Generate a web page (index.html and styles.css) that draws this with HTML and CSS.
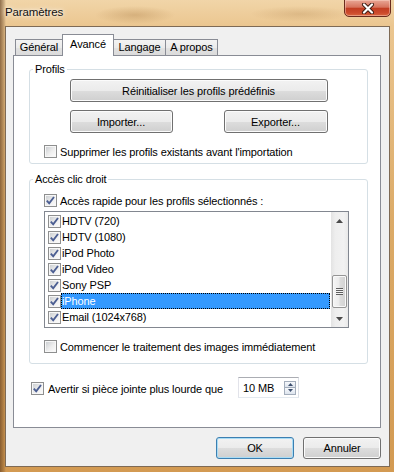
FILE: index.html
```html
<!DOCTYPE html>
<html lang="fr">
<head>
    <meta charset="UTF-8">
    <meta name="viewport" content="width=device-width, initial-scale=1.0">
    <title>Paramètres</title>
    <link rel="stylesheet" href="styles.css">
</head>
<body>
<div class="window">
    <div class="titlebar">
        <span class="title">Paramètres</span>
        <button class="close" type="button" aria-label="Fermer">
            <svg width="14" height="11" viewBox="0 0 14 11">
                <path d="M3 1.5 L11 9.5 M11 1.5 L3 9.5" stroke="#3b1a12" stroke-width="4" stroke-linecap="round"/>
                <path d="M3 1.5 L11 9.5 M11 1.5 L3 9.5" stroke="#fff" stroke-width="2.2" stroke-linecap="round"/>
            </svg>
        </button>
    </div>

    <div class="client">
        <div class="tabs">
            <div class="tab tab-general">Général</div>
            <div class="tab tab-advanced active">Avancé</div>
            <div class="tab tab-lang">Langage</div>
            <div class="tab tab-about">A propos</div>
        </div>

        <div class="panel">
            <fieldset class="group group-profiles">
                <legend>Profils</legend>
                <button class="btn btn-wide" type="button">Réinitialiser les profils prédéfinis</button>
                <div class="btn-row">
                    <button class="btn btn-import" type="button">Importer...</button>
                    <button class="btn btn-export" type="button">Exporter...</button>
                </div>
                <label class="check">
                    <span class="box"></span>
                    <span>Supprimer les profils existants avant l'importation</span>
                </label>
            </fieldset>

            <fieldset class="group group-access">
                <legend>Accès clic droit</legend>
                <label class="check">
                    <span class="box"><svg width="11" height="11" viewBox="0 0 11 11"><path d="M1.8 5.6 L4.2 8.3 L9 2" fill="none" stroke="#4b5e92" stroke-width="1.9"/></svg></span>
                    <span>Accès rapide pour les profils sélectionnés :</span>
                </label>

                <div class="list">
                    <ul class="items">
                        <li class="item"><span class="box"><svg width="11" height="11" viewBox="0 0 11 11"><path d="M1.8 5.6 L4.2 8.3 L9 2" fill="none" stroke="#4b5e92" stroke-width="1.9"/></svg></span><span class="label">HDTV (720)</span></li>
                        <li class="item"><span class="box"><svg width="11" height="11" viewBox="0 0 11 11"><path d="M1.8 5.6 L4.2 8.3 L9 2" fill="none" stroke="#4b5e92" stroke-width="1.9"/></svg></span><span class="label">HDTV (1080)</span></li>
                        <li class="item"><span class="box"><svg width="11" height="11" viewBox="0 0 11 11"><path d="M1.8 5.6 L4.2 8.3 L9 2" fill="none" stroke="#4b5e92" stroke-width="1.9"/></svg></span><span class="label">iPod Photo</span></li>
                        <li class="item"><span class="box"><svg width="11" height="11" viewBox="0 0 11 11"><path d="M1.8 5.6 L4.2 8.3 L9 2" fill="none" stroke="#4b5e92" stroke-width="1.9"/></svg></span><span class="label">iPod Video</span></li>
                        <li class="item"><span class="box"><svg width="11" height="11" viewBox="0 0 11 11"><path d="M1.8 5.6 L4.2 8.3 L9 2" fill="none" stroke="#4b5e92" stroke-width="1.9"/></svg></span><span class="label">Sony PSP</span></li>
                        <li class="item selected"><span class="box"><svg width="11" height="11" viewBox="0 0 11 11"><path d="M1.8 5.6 L4.2 8.3 L9 2" fill="none" stroke="#4b5e92" stroke-width="1.9"/></svg></span><span class="label">iPhone</span></li>
                        <li class="item"><span class="box"><svg width="11" height="11" viewBox="0 0 11 11"><path d="M1.8 5.6 L4.2 8.3 L9 2" fill="none" stroke="#4b5e92" stroke-width="1.9"/></svg></span><span class="label">Email (1024x768)</span></li>
                    </ul>
                    <div class="scrollbar">
                        <span class="arrow"><svg width="7" height="4" viewBox="0 0 7 4"><path d="M0 4 L3.5 0 L7 4 Z" fill="#4a4a4a"/></svg></span>
                        <div class="track">
                            <span class="thumb"><span class="grip"></span></span>
                        </div>
                        <span class="arrow"><svg width="7" height="4" viewBox="0 0 7 4"><path d="M0 0 L7 0 L3.5 4 Z" fill="#4a4a4a"/></svg></span>
                    </div>
                </div>

                <label class="check check-last">
                    <span class="box"></span>
                    <span>Commencer le traitement des images immédiatement</span>
                </label>
            </fieldset>

            <div class="warn-row">
                <label class="check">
                    <span class="box"><svg width="11" height="11" viewBox="0 0 11 11"><path d="M1.8 5.6 L4.2 8.3 L9 2" fill="none" stroke="#4b5e92" stroke-width="1.9"/></svg></span>
                    <span class="warn-text">Avertir si pièce jointe plus lourde que</span>
                </label>
                <div class="spin">
                    <span class="spin-value">10 MB</span>
                    <span class="spin-buttons">
                        <span class="spin-btn"><svg width="5" height="3" viewBox="0 0 5 3"><path d="M0 3 L2.5 0 L5 3 Z" fill="#3d4f6e"/></svg></span>
                        <span class="spin-btn"><svg width="5" height="3" viewBox="0 0 5 3"><path d="M0 0 L5 0 L2.5 3 Z" fill="#3d4f6e"/></svg></span>
                    </span>
                </div>
            </div>
        </div>

        <div class="actions">
            <button class="btn btn-default" type="button">OK</button>
            <button class="btn" type="button">Annuler</button>
        </div>
    </div>
</div>
</body>
</html>
```

FILE: styles.css
```css
* {
    box-sizing: border-box;
}
body {
    margin: 0;
    font-family: "Liberation Sans", Arial, sans-serif;
    font-size: 11px;
    letter-spacing: -0.12px;
    color: #000;
}
.window {
    width: 394px;
    height: 472px;
    display: flex;
    flex-direction: column;
    overflow: hidden;
    background:
        linear-gradient(to right, rgba(95, 60, 30, 0.65) 0, rgba(95, 60, 30, 0.25) 4px, rgba(95, 60, 30, 0) 6px),
        radial-gradient(ellipse 40px 9px at 135px 15px, rgba(170, 125, 70, 0.35), rgba(170, 125, 70, 0)),
        radial-gradient(ellipse 50px 8px at 300px 14px, rgba(170, 125, 70, 0.25), rgba(170, 125, 70, 0)),
        linear-gradient(#f1d5a8 0, #ebc690 26px, #dcab68 220px, #d39a52 472px);
}

/* title bar */
.titlebar {
    flex: none;
    height: 26px;
    display: flex;
    justify-content: space-between;
    align-items: flex-start;
}
.title {
    margin: 5px 0 0 5px;
    font-size: 11.5px;
    line-height: 14px;
    color: #111;
    text-shadow: 0 0 6px rgba(255, 255, 255, 0.9), 0 0 3px rgba(255, 255, 255, 0.8);
}
.close {
    width: 47px;
    height: 18px;
    margin: -1px 3px 0 0;
    padding: 0;
    display: flex;
    align-items: center;
    justify-content: center;
    border: 1px solid #6a2b1d;
    border-radius: 0 0 5px 5px;
    background: linear-gradient(#e9a796 0, #d7735d 45%, #c23d22 52%, #cc4a2c 80%, #d9663f 100%);
    box-shadow: inset 0 0 0 1px rgba(255, 220, 205, 0.45);
}

/* client area */
.client {
    flex: 1;
    margin: 0 4px 5px 5px;
    background: #f0f0f0;
    border: 1px solid #7e6a55;
    display: flex;
    flex-direction: column;
}
.tabs {
    height: 28px;
    display: flex;
    align-items: flex-end;
    padding: 7px 0 0 9px;
}
.tab {
    height: 16px;
    line-height: 15px;
    text-align: center;
    border: 1px solid #898c95;
    border-bottom: 0;
    margin-left: -1px;
    background: linear-gradient(#f3f3f3, #ebebeb 50%, #e2e2e2 51%, #dbdbdb);
}
.tab-general { width: 48px; margin-left: 0; }
.tab-advanced { width: 52px; }
.tab-lang { width: 53px; }
.tab-about { width: 53px; }
.tab.active {
    height: 22px;
    margin-bottom: -1px;
    padding-top: 2px;
    background: #fff;
    z-index: 1;
}
.panel {
    height: 373px;
    margin: 0 8px 0 7px;
    padding: 6px 12px 0 15px;
    border: 1px solid #898c95;
    background: #fff;
}

/* group boxes */
.group {
    margin: 0;
    padding: 2px 0 4px;
    min-width: 0;
    border: 1px solid #d5dfe5;
    border-radius: 3px;
}
.group legend {
    margin-left: 3px;
    padding: 0 2px;
    line-height: 15px;
}
.group-access {
    margin-top: 8px;
    padding: 6px 0 9px;
}

/* buttons */
.btn {
    font: inherit;
    letter-spacing: inherit;
    color: #000;
    height: 23px;
    padding: 0;
    border: 1px solid #707070;
    border-radius: 3px;
    background: linear-gradient(#f2f2f2 0, #ebebeb 50%, #dddddd 51%, #cfcfcf 100%);
    box-shadow: inset 0 0 0 1px #fbfbfb;
}
.btn-wide {
    display: block;
    width: 258px;
    margin: 0 auto;
}
.btn-row {
    width: 258px;
    margin: 8px auto 0;
    display: flex;
    justify-content: space-between;
}
.btn-import { width: 103px; }
.btn-export { width: 104px; }
.btn-default {
    border-color: #3c7fb1;
    box-shadow: inset 0 0 0 1px #a9dcf5;
}

/* checkboxes */
.check {
    display: flex;
    align-items: center;
    gap: 3px;
    height: 15px;
    margin: 11px 0 0 14px;
}
.group-access .check {
    margin-top: 0;
}
.group-access .check-last {
    margin-top: 11px;
}
.box {
    flex: none;
    width: 13px;
    height: 13px;
    display: flex;
    border: 1px solid #8e8f8f;
    background: linear-gradient(135deg, #cdd0d3 10%, #eeeeee 55%, #fafafa 90%);
    box-shadow: inset 0 0 0 1px #f7f7f7;
}

/* list view */
.list {
    display: flex;
    width: 305px;
    height: 117px;
    margin: 3px 0 0 14px;
    border: 1px solid #828790;
    background: #fff;
}
.items {
    flex: 1;
    list-style: none;
    margin: 0;
    padding: 1px 0 0;
}
.item {
    height: 16px;
    display: flex;
    align-items: center;
    padding-left: 3px;
}
.item .label {
    flex: 1;
    height: 16px;
    line-height: 16px;
    padding-left: 1px;
    margin-right: 1px;
}
.item.selected .label {
    background: #3399ff;
    color: #fff;
    outline: 1px dotted #000;
    outline-offset: -1px;
}
.scrollbar {
    width: 17px;
    display: flex;
    flex-direction: column;
    background: linear-gradient(to right, #e3e3e3, #eeeeee 25%, #f2f2f2 75%, #e9e9e9);
}
.arrow {
    height: 17px;
    display: flex;
    align-items: center;
    justify-content: center;
}
.track {
    flex: 1;
}
.thumb {
    display: flex;
    align-items: center;
    justify-content: center;
    width: 15px;
    height: 33px;
    margin: 46px 0 0 1px;
    border: 1px solid #959595;
    border-radius: 2px;
    background: linear-gradient(to right, #f5f5f5, #ececec 45%, #dcdcdc 55%, #d2d2d2);
    box-shadow: inset 0 0 0 1px #f9f9f9;
}
.grip {
    width: 7px;
    height: 7px;
    background: repeating-linear-gradient(#5e5e5e 0, #5e5e5e 1px, #f4f4f4 1px, #f4f4f4 2px);
}

/* size warning */
.warn-row {
    display: flex;
    align-items: center;
    height: 21px;
    margin: 13px 0 0 2px;
}
.warn-row .check {
    margin: 2px 0 0;
    gap: 4px;
}
.warn-text {
    width: 190px;
}
.spin {
    display: flex;
    align-items: center;
    width: 61px;
    height: 21px;
    padding: 0 2px 0 4px;
    border: 1px solid;
    border-color: #abadb3 #dbdfe6 #e3e9ef #e2e3ea;
    background: #fff;
}
.spin-value {
    flex: 1;
}
.spin-buttons {
    display: flex;
    flex-direction: column;
}
.spin-btn {
    width: 12px;
    height: 7px;
    display: flex;
    align-items: center;
    justify-content: center;
    border: 1px solid #a3adbb;
    background: linear-gradient(#f7f9fc, #dde4ee);
}
.spin-btn + .spin-btn {
    border-top: 0;
}

/* dialog buttons */
.actions {
    display: flex;
    justify-content: flex-end;
    gap: 9px;
    padding: 9px 8px 0 0;
}
.actions .btn {
    width: 78px;
    height: 22px;
}
```
